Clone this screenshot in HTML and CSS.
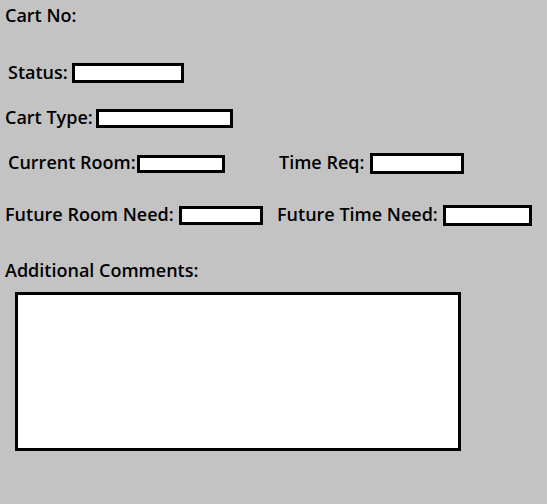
FILE: index.html
```html
<!DOCTYPE html>
<html>
<head>
<meta charset="utf-8">
<link rel="stylesheet" href="styles.css">
</head>
<body>
<div class="form">
  <div class="row row-cart">
    <span class="label">Cart No:</span>
  </div>
  <div class="row row-status indent">
    <span class="label w-status">Status:</span>
    <span class="box box-status"></span>
  </div>
  <div class="row row-type">
    <span class="label w-type">Cart Type:</span>
    <span class="box box-type"></span>
  </div>
  <div class="row row-room indent">
    <div class="pair">
      <span class="label w-room">Current Room:</span>
      <span class="box box-room"></span>
    </div>
    <div class="pair">
      <span class="label w-time">Time Req:</span>
      <span class="box box-time"></span>
    </div>
  </div>
  <div class="row row-future">
    <div class="pair">
      <span class="label w-froom">Future Room Need:</span>
      <span class="box box-froom"></span>
    </div>
    <div class="pair">
      <span class="label w-ftime">Future Time Need:</span>
      <span class="box box-ftime"></span>
    </div>
  </div>
  <div class="row row-comments">
    <span class="label">Additional Comments:</span>
  </div>
  <div class="comments"></div>
</div>
</body>
</html>
```

FILE: styles.css
```css
html, body {
  margin: 0;
  padding: 0;
  background: #c3c3c3;
}
body {
  width: 547px;
  height: 504px;
  overflow: hidden;
  font-family: "Open Sans", "Liberation Sans", sans-serif;
  font-weight: 600;
  font-size: 18px;
  color: #000;
}
.form {
  padding: 6px 0 0 5px;
}
.row {
  display: flex;
  align-items: center;
  height: 21px;
}
.indent {
  padding-left: 3px;
}
.label {
  flex: none;
  white-space: nowrap;
  line-height: 21px;
  margin-top: -2px;
}
.pair {
  flex: none;
  display: flex;
  align-items: center;
  width: 272px;
}
.row-room .pair:first-child {
  width: 271px;
}
.box {
  flex: none;
  display: block;
  box-sizing: border-box;
  background: #fff;
  border: 3px solid #000;
}
.row-status { margin-top: 36px; height: 20px; }
.row-type { margin-top: 26px; height: 19px; }
.row-room { margin-top: 25px; }
.row-future { margin-top: 31px; }
.row-comments { margin-top: 35px; }

.w-status { width: 64px; }
.w-type { width: 91px; }
.w-room { width: 129px; }
.w-time { width: 91px; }
.w-froom { width: 174px; }
.w-ftime { width: 166px; }

.box-status { width: 112px; height: 20px; }
.box-type { width: 137px; height: 19px; }
.box-room { width: 88px; height: 18px; }
.box-time { width: 94px; height: 21px; }
.box-froom { width: 84px; height: 19px; }
.box-ftime { width: 89px; height: 21px; }

.comments {
  box-sizing: border-box;
  margin: 10px 0 0 10px;
  width: 446px;
  height: 159px;
  background: #fff;
  border: 3px solid #000;
}
```
